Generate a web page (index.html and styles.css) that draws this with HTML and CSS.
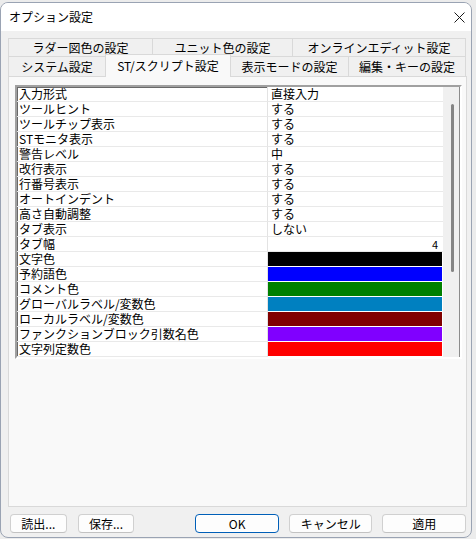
FILE: index.html
```html
<!DOCTYPE html>
<html lang="ja">
<head>
<meta charset="utf-8">
<title>オプション設定</title>
<link rel="stylesheet" href="styles.css">
</head>
<body>
<div class="window">
  <div class="titlebar">
    <span class="title">オプション設定</span>
    <svg class="close" width="11" height="11" viewBox="0 0 11 11"><path d="M0.5 0.5 L10.5 10.5 M10.5 0.5 L0.5 10.5" stroke="#1a1a1a" stroke-width="1" fill="none"/></svg>
  </div>
  <div class="content">
    <div class="tabs">
      <div class="tabrow back">
        <div class="tab w1">ラダー図色の設定</div>
        <div class="tab w2">ユニット色の設定</div>
        <div class="tab w3">オンラインエディット設定</div>
      </div>
      <div class="tabrow front">
        <div class="tab w4">システム設定</div>
        <div class="tab w5 active">ST/スクリプト設定</div>
        <div class="tab w6">表示モードの設定</div>
        <div class="tab w7">編集・キーの設定</div>
      </div>
    </div>
    <div class="panel">
      <div class="list">
        <div class="rows">
          <div class="row"><div class="lbl">入力形式</div><div class="val">直接入力</div></div>
          <div class="row"><div class="lbl">ツールヒント</div><div class="val">する</div></div>
          <div class="row"><div class="lbl">ツールチップ表示</div><div class="val">する</div></div>
          <div class="row"><div class="lbl">STモニタ表示</div><div class="val">する</div></div>
          <div class="row"><div class="lbl">警告レベル</div><div class="val">中</div></div>
          <div class="row"><div class="lbl">改行表示</div><div class="val">する</div></div>
          <div class="row"><div class="lbl">行番号表示</div><div class="val">する</div></div>
          <div class="row"><div class="lbl">オートインデント</div><div class="val">する</div></div>
          <div class="row"><div class="lbl">高さ自動調整</div><div class="val">する</div></div>
          <div class="row"><div class="lbl">タブ表示</div><div class="val">しない</div></div>
          <div class="row"><div class="lbl">タブ幅</div><div class="val num">4</div></div>
          <div class="row"><div class="lbl">文字色</div><div class="val color"><div class="sw c-black"></div></div></div>
          <div class="row"><div class="lbl">予約語色</div><div class="val color"><div class="sw c-blue"></div></div></div>
          <div class="row"><div class="lbl">コメント色</div><div class="val color"><div class="sw c-green"></div></div></div>
          <div class="row"><div class="lbl">グローバルラベル/変数色</div><div class="val color"><div class="sw c-teal"></div></div></div>
          <div class="row"><div class="lbl">ローカルラベル/変数色</div><div class="val color"><div class="sw c-maroon"></div></div></div>
          <div class="row"><div class="lbl">ファンクションブロック引数名色</div><div class="val color"><div class="sw c-purple"></div></div></div>
          <div class="row"><div class="lbl">文字列定数色</div><div class="val color"><div class="sw c-red"></div></div></div>
        </div>
        <div class="scroll"><div class="thumb"></div></div>
      </div>
    </div>
    <div class="buttons">
      <button class="btn small">読出...</button>
      <button class="btn small">保存...</button>
      <button class="btn wide default">OK</button>
      <button class="btn wide">キャンセル</button>
      <button class="btn wide">適用</button>
    </div>
  </div>
</div>
</body>
</html>
```
FILE: styles.css
```css
* { box-sizing: border-box; }
html, body { margin: 0; padding: 0; }
body {
  background: #ececec;
  font-family: "Noto Sans CJK JP", "Noto Sans", sans-serif;
  font-size: 12px;
  color: #000;
  width: 476px;
  height: 539px;
  overflow: hidden;
}
.window {
  margin-top: 2px;
  width: 472px;
  height: 536px;
  border: 1px solid #9aa3b3;
  border-radius: 8px;
  background: #f0f0f0;
  overflow: hidden;
  display: flex;
  flex-direction: column;
}
.titlebar {
  height: 28px;
  background: #ffffff;
  display: flex;
  align-items: center;
  justify-content: space-between;
  padding: 0 6px 0 8px;
  flex: none;
}
.title { font-size: 12px; line-height: 14px; }
.close { display: block; }
.content {
  flex: 1;
  display: flex;
  flex-direction: column;
  padding: 7px 4px 0 7px;
}
.tabs { display: flex; flex-direction: column; }
.tabrow { display: flex; }
.tabrow.back { height: 18px; }
.tabrow.front { height: 20px; }
.tab {
  border: 1px solid #d9d9d9;
  border-bottom: none;
  background: #f0f0f0;
  display: flex;
  align-items: center;
  justify-content: center;
  font-size: 12px;
  line-height: 14px;
  white-space: nowrap;
  margin-right: -1px;
}
.back .tab { height: 18px; padding-top: 1px; }
.front .tab { height: 20px; padding-top: 1px; }
.w1 { width: 145px; }
.w2 { width: 141px; }
.w3 { width: 174px; }
.w4 { width: 98px; }
.w5 { width: 126px; }
.w6 { width: 119px; }
.w7 { width: 118px; }
.front .tab.active {
  height: 23px;
  margin-top: -2px;
  margin-bottom: -1px;
  background: #f9f9f9;
  position: relative;
  z-index: 1;
  padding-top: 0;
}
.panel {
  height: 431px;
  border: 1px solid #d9d9d9;
  background: #f9f9f9;
  padding: 8px 4px 0 6px;
  flex: none;
}
.list {
  height: 274px;
  display: flex;
  border-style: solid;
  border-width: 2px;
  border-color: #a0a0a0 #ffffff #ffffff #a0a0a0;
  box-shadow: inset 1px 1px 0 #696969;
  background: #ffffff;
}
.rows {
  width: 426px;
  display: flex;
  flex-direction: column;
}
.row {
  height: 15px;
  display: flex;
  flex: none;
}
.lbl {
  width: 251px;
  padding-left: 2px;
  border-right: 1px solid #e3e3e3;
  border-bottom: 1px solid #e9e9e9;
  line-height: 14px;
  white-space: nowrap;
}
.val {
  width: 175px;
  padding-left: 3px;
  border-bottom: 1px solid #e9e9e9;
  line-height: 14px;
  white-space: nowrap;
  background: #fff;
}
.val.num { text-align: right; padding-right: 5px; font-size: 11px; }
.val.color { padding: 0; border-bottom: 1px solid #ffffff; }
.sw { height: 14px; width: 174px; }
.c-black { background: #000000; }
.c-blue { background: #0000ff; }
.c-green { background: #008000; }
.c-teal { background: #0080c0; }
.c-maroon { background: #800000; }
.c-purple { background: #8000ff; }
.c-red { background: #ff0000; }
.scroll {
  flex: 1;
  background: #f0f0f0;
  padding: 17px 0 0 8px;
  border-right: 1px solid #8c8c8c;
}
.thumb {
  width: 3px;
  height: 168px;
  background: #858585;
  border-radius: 2px;
}
.buttons {
  display: flex;
  margin-top: 7px;
  padding-left: 2px;
  padding-right: 1px;
  gap: 11px;
}
.btn {
  height: 19px;
  border: 1px solid #d0d0d0;
  border-bottom-color: #c2c2c2;
  border-radius: 4px;
  background: #fdfdfd;
  font-family: "Noto Sans CJK JP", "Noto Sans", sans-serif;
  font-size: 12px;
  line-height: 15px;
  color: #000;
  padding: 0;
}
.btn.small { width: 57px; }
.btn.wide { width: 84px; }
.btn.default {
  margin-left: 50px;
  border: 1px solid #005fb8;
  box-shadow: inset 0 0 0 1px #ffffff;
}
.btn.wide + .btn.wide { margin-left: -1px; }
```
